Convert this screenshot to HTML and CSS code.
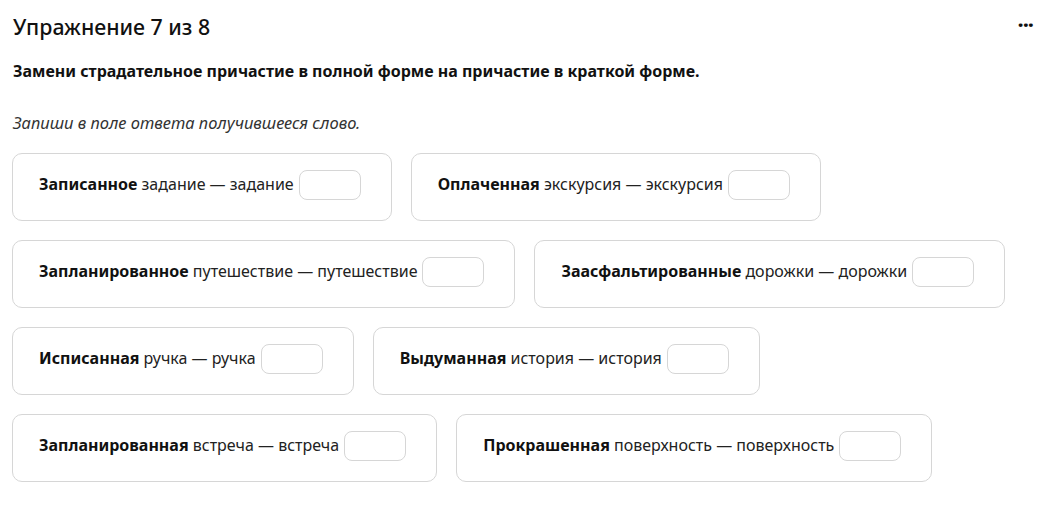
FILE: index.html
```html
<!DOCTYPE html>
<html lang="ru">
<head>
<meta charset="utf-8">
<link rel="stylesheet" href="styles.css">
</head>
<body>
<div class="page">
  <header class="head">
    <h1 class="title">Упражнение 7 из 8</h1>
    <span class="more">&middot;&middot;&middot;</span>
  </header>
  <p class="task">Замени страдательное причастие в полной форме на причастие в краткой форме.</p>
  <p class="hint">Запиши в поле ответа получившееся слово.</p>
  <div class="cards">
    <div class="card"><span><b>Записанное</b> задание — задание</span><span class="input"></span></div>
    <div class="card"><span><b>Оплаченная</b> экскурсия — экскурсия</span><span class="input"></span></div>
    <div class="card"><span><b>Запланированное</b> путешествие — путешествие</span><span class="input"></span></div>
    <div class="card"><span><b>Заасфальтированные</b> дорожки — дорожки</span><span class="input"></span></div>
    <div class="card"><span><b>Исписанная</b> ручка — ручка</span><span class="input"></span></div>
    <div class="card"><span><b>Выдуманная</b> история — история</span><span class="input"></span></div>
    <div class="card"><span><b>Запланированная</b> встреча — встреча</span><span class="input"></span></div>
    <div class="card"><span><b>Прокрашенная</b> поверхность — поверхность</span><span class="input"></span></div>
  </div>
</div>
</body>
</html>
```
FILE: styles.css
```css
* { box-sizing: border-box; }
body {
  margin: 0;
  background: #fff;
  color: #111;
  font-family: "Noto Sans", "Open Sans", sans-serif;
}
.page {
  padding: 12px 12px 0 12px;
  width: 1062px;
}
.head {
  display: flex;
  justify-content: space-between;
  align-items: center;
  height: 28px;
}
.title {
  margin: 0 0 0 1px;
  font-size: 21.3px;
  font-weight: 500;
  color: #111;
}
.more {
  font-size: 22px;
  font-weight: 700;
  letter-spacing: -1px;
  margin-right: 17px;
  margin-top: -4px;
  line-height: 1;
}
.task {
  margin: 20px 0 0 1px;
  font-size: 16px;
  font-weight: 700;
}
.hint {
  margin: 29px 0 0 1px;
  font-size: 16.5px;
  font-style: italic;
  color: #333;
}
.cards {
  margin-top: 19px;
  display: flex;
  flex-wrap: wrap;
  gap: 19px;
  width: 1010px;
}
.card {
  display: flex;
  align-items: center;
  gap: 5px;
  height: 68px;
  padding: 0 30px 6px 26px;
  border: 1px solid #d6d6d6;
  border-radius: 10px;
  font-size: 16px;
  color: #222;
}
.card b { color: #111; }
.input {
  width: 62px;
  height: 30px;
  margin-top: 1px;
  border: 1px solid #d6d6d6;
  border-radius: 8px;
}
```
